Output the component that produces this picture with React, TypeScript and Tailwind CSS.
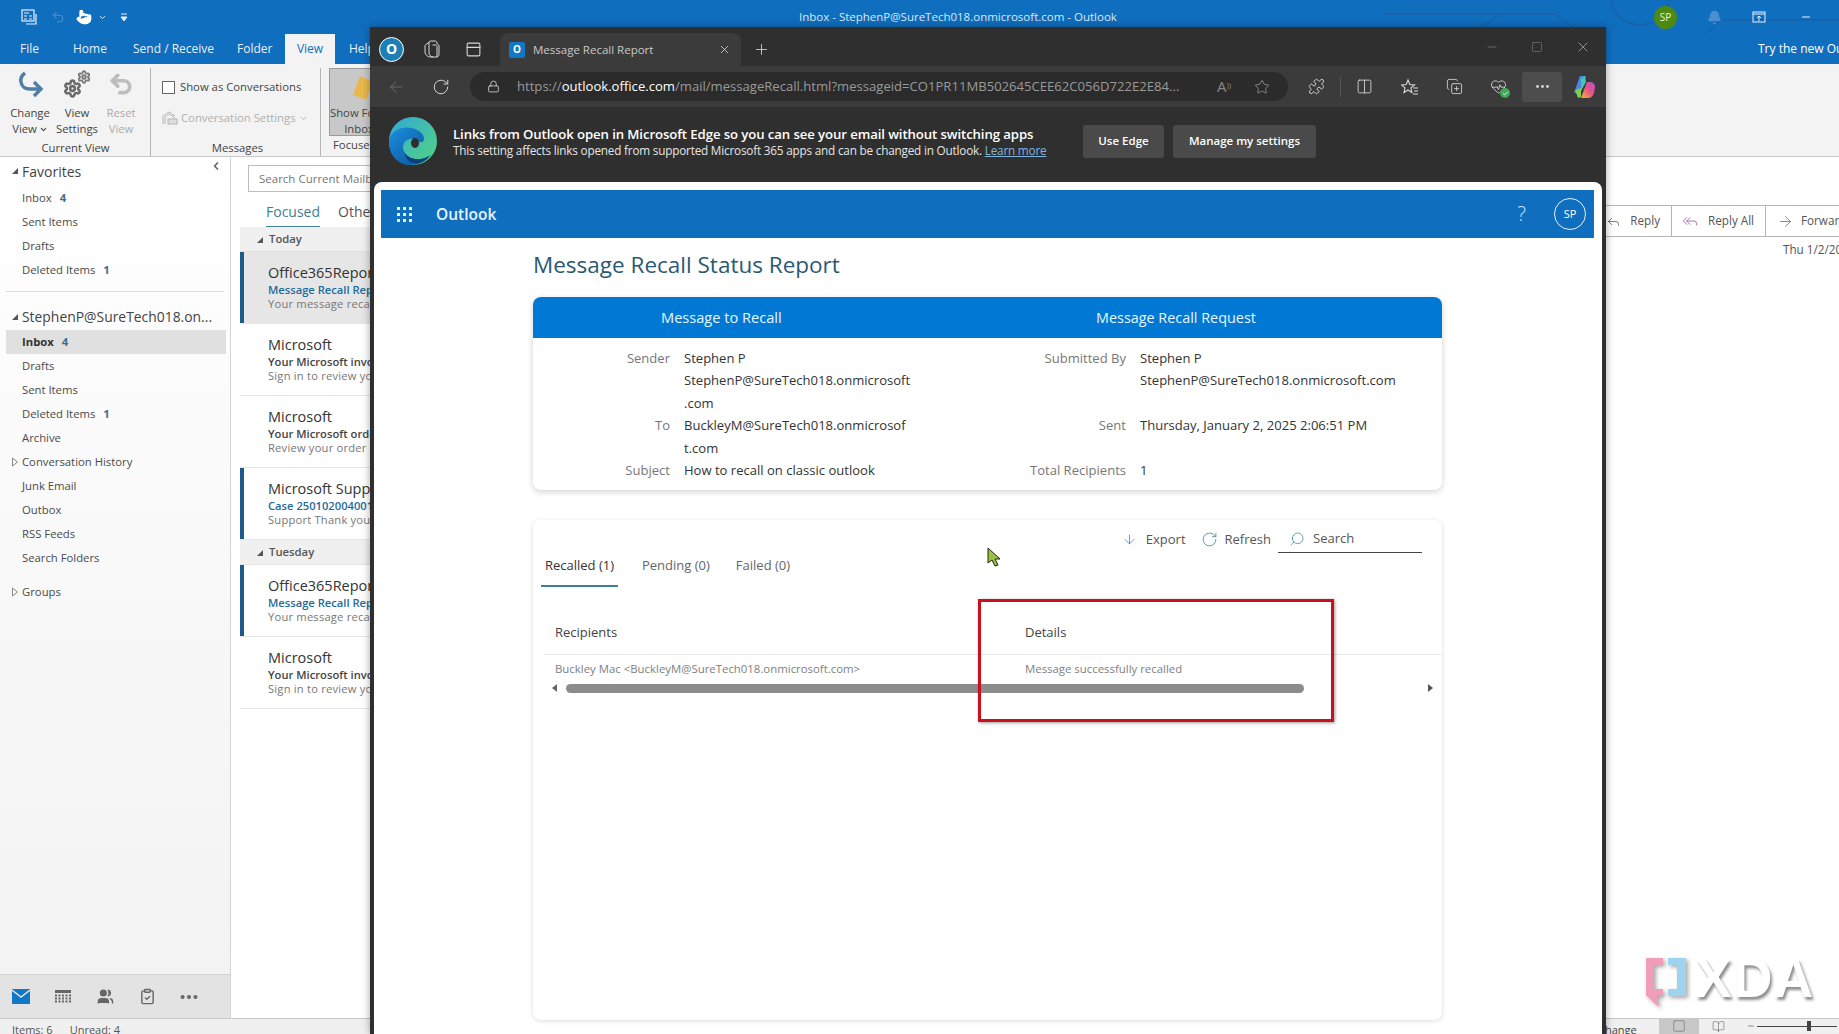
import React from "react";
import {
  Undo2, Pointer, ChevronDown, ChevronLeft, Settings, X, Plus, ArrowLeft, RotateCw, Lock, Star, Puzzle,
  Columns2, CopyPlus, HeartPulse, Ellipsis, Minus, Square, PanelTop, ArrowDown, Search,
  Reply, ReplyAll, ArrowRight, Bell, Users, ClipboardCheck, BookOpen, Check,
} from "lucide-react";

const Tri = ({ open }: { open?: boolean }) =>
  open ? (
    <svg width="8" height="8" viewBox="0 0 8 8" className="shrink-0"><path d="M7 1v6H1z" fill="#555" /></svg>
  ) : (
    <svg width="8" height="10" viewBox="0 0 8 10" className="shrink-0"><path d="M1.5 1l5 4-5 4z" fill="none" stroke="#888" /></svg>
  );

function NavItem({ label, count, active, arrow }: { label: string; count?: string; active?: boolean; arrow?: boolean }) {
  return (
    <div className={`h-6 flex items-center text-[11.3px] ml-[6px] mr-[4px] ${active ? "bg-[#e0e0e0] font-bold text-[#333]" : "text-[#4a4a4a]"}`}>
      <div className="w-4 flex justify-end pr-[3px]">{arrow && <Tri />}</div>
      <span className="whitespace-nowrap">{label}</span>
      {count && <span className="ml-2 font-bold text-[#3f6d8c]">{count}</span>}
    </div>
  );
}

function Msg({ from, subject, preview, bar, selected }: { from: string; subject: string; preview: string; bar?: boolean; selected?: boolean }) {
  return (
    <div className={`h-[72px] shrink-0 flex border-b ${selected ? "bg-[#e6e6e6] border-[#e6e6e6]" : "border-[#e6e6e6]"}`}>
      <div className={`w-1 shrink-0 ${bar ? "bg-[#1d5c8a]" : ""}`} />
      <div className="pl-6 pt-[11px] whitespace-nowrap">
        <div className="text-[14.5px] leading-[19px] text-[#333]">{from}</div>
        <div className={`text-[11.2px] leading-[15px] font-semibold ${bar ? "text-[#1f6a9c]" : "text-[#444]"}`}>{subject}</div>
        <div className="text-[11.2px] leading-[14px] text-[#777] tracking-[0.2px]">{preview}</div>
      </div>
    </div>
  );
}

function Group({ label }: { label: string }) {
  return (
    <div className="h-[25px] shrink-0 bg-[#f0f0f0] border-b border-[#e2e2e2] flex items-center pl-[16px] gap-[5px] text-[11.3px] font-semibold text-[#555] pt-[1px]">
      <Tri open />
      <span>{label}</span>
    </div>
  );
}

const EdgeLogo = () => (
  <svg width="50" height="50" viewBox="0 0 50 50">
    <defs>
      <linearGradient id="e1" x1="0" y1="0" x2="1" y2="1">
        <stop offset="0" stopColor="#2fa9d8" />
        <stop offset="1" stopColor="#54d47d" />
      </linearGradient>
      <linearGradient id="e2" x1="0" y1="0" x2="1" y2="1">
        <stop offset="0" stopColor="#1b8fdc" />
        <stop offset="1" stopColor="#0b4f99" />
      </linearGradient>
    </defs>
    <circle cx="25" cy="25" r="24" fill="url(#e1)" />
    <path d="M1 25C3 12 20 8 31 15c6 4 6 10 3 11-4 1-6-4-12-3-7 1-9 9-5 14 3 5 10 7 16 6 4-1 7-2 9-4-5 7-12 10-20 10C10 49 0 38 1 25z" fill="url(#e2)" />
    <path d="M17 37c3 5 10 7 16 6 4-1 7-2 9-4-3 6-10 9-16 8-5-1-9-5-9-10z" fill="#0a3f80" />
    <ellipse cx="27" cy="27" rx="4" ry="5" fill="#2f2f2f" />
  </svg>
);

const Copilot = () => (
  <svg width="24" height="24" viewBox="0 0 24 24">
    <defs>
      <linearGradient id="c1" x1="0" y1="0" x2="1" y2="1">
        <stop offset="0" stopColor="#2aa5e8" />
        <stop offset="1" stopColor="#7c5be0" />
      </linearGradient>
      <linearGradient id="c2" x1="0" y1="1" x2="1" y2="0">
        <stop offset="0" stopColor="#f6b73c" />
        <stop offset="0.5" stopColor="#e8557f" />
        <stop offset="1" stopColor="#b44ed6" />
      </linearGradient>
    </defs>
    <path d="M8 1h6l-5 15a3 3 0 0 1-3 2H2z" fill="url(#c1)" />
    <path d="M9 23h7c3 0 5-2 6-5l1-6c0-3-2-5-5-5l-3 0z" fill="url(#c2)" />
    <path d="M9 4l4-3 1 6-5 9z" fill="#3fc8b8" />
    <path d="M3 15l6-2 0 9-3 1z" fill="#7ad04f" />
  </svg>
);

export default function App() {
  const fav = [
    { label: "Inbox", count: "4" },
    { label: "Sent Items" },
    { label: "Drafts" },
    { label: "Deleted Items", count: "1" },
  ];
  const folders = [
    { label: "Drafts" },
    { label: "Sent Items" },
    { label: "Deleted Items", count: "1" },
    { label: "Archive" },
    { label: "Conversation History", arrow: true },
    { label: "Junk Email" },
    { label: "Outbox" },
    { label: "RSS Feeds" },
    { label: "Search Folders" },
  ];
  return (
    <div className="relative w-[1839px] h-[1034px] overflow-hidden bg-white flex flex-col font-['Open_Sans',sans-serif]">
      {/* Outlook title bar */}
      <div className="relative h-[34px] shrink-0 bg-[#106ebe] flex items-center text-[#d8e8f6]">
        <svg className="absolute left-[1380px] top-0" width="459" height="64" viewBox="0 0 459 64" fill="none" stroke="#1a62a8" strokeWidth="1.5">
          <path d="M5 14h170l40 30h60M230 -5a30 30 0 1 0 60 0a30 30 0 1 0 -60 0M300 60l40-40h119M120 14l-40 30H40" />
        </svg>
        <div className="relative w-[799px] h-full flex items-center shrink-0">
          <svg width="18" height="18" viewBox="0 0 18 18" className="ml-[20px]" fill="none" stroke="#e6f0fa" strokeWidth="1.2">
            <rect x="2" y="2" width="12" height="11" /><path d="M4 5h5M4 8h3M9 8h3M4 11h3M9 11h3M6 16h10V6" />
          </svg>
          <Undo2 size={14} className="ml-[13px] text-[#4c8fd0]" strokeWidth={1.8} />
          <Pointer size={16} className="ml-[11px] text-white" strokeWidth={2} fill="white" />
          <ChevronDown size={9} className="ml-[6px] text-[#e6f0fa]" strokeWidth={2.5} />
          <svg width="8" height="9" viewBox="0 0 8 9" className="ml-[13px]"><path d="M1 1h6M1 4h6l-3 4z" fill="#e6f0fa" stroke="#e6f0fa" /></svg>
        </div>
        <span className="relative text-[11.5px] whitespace-nowrap">Inbox - StephenP@SureTech018.onmicrosoft.com - Outlook</span>
        <div className="relative ml-auto flex items-center h-full pr-[27px]">
          <div className="w-[23px] h-[23px] rounded-full bg-[#4e8a12] text-[#e6f4d8] text-[10px] flex items-center justify-center">SP</div>
          <Bell size={15} className="ml-[30px] text-[#4c8fd0]" fill="#4c8fd0" />
          <svg width="14" height="12" viewBox="0 0 14 12" className="ml-[30px]" fill="none" stroke="#e6f0fa"><rect x="1" y="1" width="12" height="10" /><path d="M1 3h12M7 10V5M5 7l2-2 2 2" /></svg>
          <Minus size={12} className="ml-[34px] text-[#e6f0fa]" />
        </div>
      </div>

      {/* Ribbon tabs */}
      <div className="relative h-[30px] shrink-0 bg-[#106ebe] flex items-center text-[12px] text-[#e6f0fa] overflow-hidden whitespace-nowrap">
        <span className="ml-[20px] w-[53px] shrink-0">File</span>
        <span className="w-[60px] shrink-0">Home</span>
        <span className="w-[104px] shrink-0">Send / Receive</span>
        <span className="w-[48px] shrink-0">Folder</span>
        <span className="w-[50px] shrink-0 h-full bg-[#f3f3f3] text-[#106ebe] flex items-center justify-center">View</span>
        <span className="ml-[14px] w-[1409px] shrink-0">Help</span>
        <span className="shrink-0 text-white">Try the new Outlook</span>
      </div>

      {/* Ribbon */}
      <div className="h-[93px] shrink-0 bg-[#f3f3f3] border-b border-[#c8c8c8] flex text-[11.3px] text-[#444] pt-[4px]">
        <div className="w-[151px] shrink-0 border-r border-[#b5b5b5] flex flex-col">
          <div className="flex-1 flex pt-[2px]">
            <div className="w-[56px] flex flex-col items-center leading-[16px] pl-[4px]">
              <svg width="28" height="28" viewBox="0 0 28 28" fill="none" stroke="#4f7fa8" strokeWidth="3.4"><path d="M9 3C2 8 4 19 14 19h10M18 12l7 7-7 7" /></svg>
              <span className="mt-[7px]">Change</span>
              <span className="flex items-center gap-[2px]">View<ChevronDown size={9} strokeWidth={3} /></span>
            </div>
            <div className="w-[42px] flex flex-col items-center leading-[16px]">
              <div className="relative w-[28px] h-[28px]">
                <Settings size={14} strokeWidth={3.2} className="absolute right-0 top-0 text-[#7a7a7a]" />
                <Settings size={19} strokeWidth={3.2} className="absolute left-0 bottom-0 text-[#6a6a6a]" />
              </div>
              <span className="mt-[7px]">View</span>
              <span>Settings</span>
            </div>
            <div className="w-[46px] flex flex-col items-center leading-[16px] text-[#aaa]">
              <Undo2 size={26} strokeWidth={3.4} className="text-[#bdbdbd] h-[28px]" />
              <span className="mt-[7px]">Reset</span>
              <span>View</span>
            </div>
          </div>
          <div className="text-center leading-[16px] pl-[1px]">Current View</div>
        </div>
        <div className="w-[170px] shrink-0 border-r border-[#b5b5b5] flex flex-col">
          <div className="flex-1 pl-[11px] pt-[11px]">
            <div className="flex items-center gap-[5px] whitespace-nowrap">
              <div className="w-[13px] h-[13px] border border-[#666] bg-white" />
              <span>Show as Conversations</span>
            </div>
            <div className="flex items-center gap-[3px] mt-[14px] text-[#b0b0b0] whitespace-nowrap">
              <svg width="16" height="16" viewBox="0 0 16 16" fill="none" stroke="#b5b5b5"><path d="M1 14V6l6-4 6 4M3 14V7l4-3 5 3v2" /><rect x="6" y="9" width="9" height="5" fill="#ddd" /></svg>
              <span>Conversation Settings</span>
              <ChevronDown size={9} strokeWidth={2.5} />
            </div>
          </div>
          <div className="text-center leading-[16px] pl-[4px]">Messages</div>
        </div>
        <div className="flex-1 flex flex-col pl-[8px]">
          <div className="relative w-[60px] h-[68px] bg-[#c8c8c8] border border-[#9a9a9a] text-center leading-[16px] pt-[36px] whitespace-nowrap overflow-hidden">
            <div className="absolute left-[26px] top-[9px] w-[14px] h-[20px] bg-[#e8b94a] rotate-[20deg]" />
            Show Focused<br />Inbox
          </div>
          <div className="leading-[16px] mt-[1px] pl-[4px] whitespace-nowrap">Focused Inbox</div>
        </div>
      </div>

      {/* Body */}
      <div className="flex-1 flex min-h-0">
        <div className="w-[231px] shrink-0 border-r border-[#d4d4d4] flex flex-col bg-linear-to-b from-white to-[#f2f2f2]">
          <div className="flex items-center h-[28px] pl-[11px] relative">
            <Tri open />
            <span className="ml-[3px] text-[14px] text-[#444]">Favorites</span>
            <ChevronLeft size={12} strokeWidth={3.5} className="absolute right-[8px] top-[3px] text-[#666]" />
          </div>
          <div className="h-px" />
          {fav.map((f) => <NavItem key={f.label} {...f} />)}
          <div className="h-px bg-[#dcdcdc] mx-[6px] mt-[9px] mb-[12px]" />
          <div className="flex items-center h-[26px] pl-[11px]">
            <Tri open />
            <span className="ml-[3px] text-[13.9px] text-[#444] whitespace-nowrap">StephenP@SureTech018.on...</span>
          </div>
          <NavItem label="Inbox" count="4" active />
          {folders.map((f) => <NavItem key={f.label} {...f} />)}
          <div className="mt-[10px]"><NavItem label="Groups" arrow /></div>
          <div className="mt-auto h-[44px] border-t border-[#d4d4d4] bg-[#e3e3e3] flex items-center text-[#666]">
            <svg width="18" height="15" viewBox="0 0 18 15" className="ml-[12px]">
              <rect width="18" height="15" fill="#1277c4" />
              <path d="M0 1l9 7 9-7" fill="none" stroke="#e3e3e3" strokeWidth="1.4" />
            </svg>
            <svg width="16" height="14" viewBox="0 0 16 14" className="ml-[25px]" fill="#666">
              <rect x="0" y="0" width="16" height="3" />
              {[4.5, 7.5, 10.5].map((y) => [0, 3.5, 7, 10.5, 14].map((x) => <rect key={`${x}-${y}`} x={x} y={y} width="2" height="2" />))}
            </svg>
            <Users size={17} className="ml-[26px]" fill="#666" />
            <ClipboardCheck size={17} className="ml-[25px]" strokeWidth={2} />
            <Ellipsis size={22} className="ml-[22px]" strokeWidth={2.5} />
          </div>
        </div>

        <div className="w-[150px] shrink-0 pl-[9px] flex flex-col overflow-hidden">
          <div className="h-[27px] ml-[8px] mt-[8px] shrink-0 border border-[#bdbdbd] flex items-center pl-[10px] text-[11.5px] text-[#777] whitespace-nowrap">Search Current Mailbox</div>
          <div className="h-[35px] shrink-0 flex items-end pl-[26px] gap-[18px] text-[14px] whitespace-nowrap">
            <span className="text-[#3f7f97] border-b border-[#3f7f97] leading-[21px] h-[26px]">Focused</span>
            <span className="text-[#555] leading-[21px] h-[26px]">Other</span>
          </div>
          <Group label="Today" />
          <Msg from="Office365Reports" subject="Message Recall Report" preview="Your message recall" bar selected />
          <Msg from="Microsoft" subject="Your Microsoft invoice" preview="Sign in to review your" />
          <Msg from="Microsoft" subject="Your Microsoft order" preview="Review your order d" />
          <Msg from="Microsoft Support" subject="Case 25010200400160" preview="Support  Thank you" bar />
          <Group label="Tuesday" />
          <Msg from="Office365Reports" subject="Message Recall Report" preview="Your message recall" bar />
          <Msg from="Microsoft" subject="Your Microsoft invoice" preview="Sign in to review your" />
        </div>

        <div className="flex-1 min-w-0 flex flex-col overflow-hidden text-[11.7px] text-[#555]">
          <div className="mt-[48px] h-[32px] border-y border-[#b5b5b5] flex justify-end whitespace-nowrap">
            <div className="w-[67px] border-r border-[#b5b5b5] flex items-center justify-end gap-[9px] pr-[11px]"><Reply size={15} strokeWidth={1.2} />Reply</div>
            <div className="w-[94px] border-r border-[#b5b5b5] flex items-center gap-[10px] pl-[10px]"><ReplyAll size={16} strokeWidth={1.2} className="text-[#8a5aa8]" />Reply All</div>
            <div className="w-[73px] flex items-center gap-[7px] pl-[11px] overflow-hidden"><ArrowRight size={17} strokeWidth={1.2} className="text-[#3f8a8a] shrink-0" />Forward</div>
          </div>
          <div className="mt-[4px] pl-[1402px] whitespace-nowrap">Thu 1/2/2025</div>
        </div>
      </div>

      {/* Status bar */}
      <div className="h-[16px] shrink-0 bg-[#f0f0f0] border-t border-[#c8c8c8] flex text-[11px] leading-[22px] text-[#555] overflow-hidden whitespace-nowrap">
        <span className="ml-[12px] shrink-0">Items: 6</span>
        <span className="ml-[17px] w-[1530px] shrink-0">Unread: 4</span>
        <span className="w-[59px] shrink-0 text-[#444]">change</span>
        <div className="w-[40px] shrink-0 h-full bg-[#c8c8c8] flex justify-center"><Square size={14} strokeWidth={1} className="text-[#666]" /></div>
        <div className="w-[40px] shrink-0 flex justify-center pt-[1px]"><BookOpen size={13} strokeWidth={1} /></div>
        <div className="flex items-center h-[14px] ml-[8px]">
          <Minus size={8} />
          <div className="relative ml-[2px] w-[80px] h-px bg-[#444]"><div className="absolute left-[50px] -top-[5px] w-[4px] h-[10px] bg-[#444]" /></div>
        </div>
      </div>

      {/* Edge window over Outlook */}
      <div className="absolute left-[370px] top-[27px] w-[1236px] h-[1007px] bg-[#2f2f2f] flex flex-col shadow-[0_0_8px_rgba(0,0,0,0.35)]">
        {/* tab strip */}
        <div className="h-[39px] shrink-0 flex items-end text-[#d8d8d8] pt-[5px]">
          <div className="self-center ml-[9px] w-[25px] h-[25px] rounded-full bg-[#1c7fb5] border border-white flex items-center justify-center overflow-hidden shrink-0">
            <span className="text-white text-[14px] leading-none font-bold">O</span>
          </div>
          <svg width="20" height="20" viewBox="0 0 20 20" className="self-center ml-[18px] shrink-0" fill="none" stroke="#d8d8d8" strokeWidth="1">
            <path d="M3 7c0-1 1-2 2-2l2-2c0-.5 1-1 2-1h4c1 0 2 1 2 2v1c1 0 2 1 2 2v8c0 2-1 3-3 3H9c-3 0-6-2-6-5z" />
            <path d="M7 3v11c0 2 2 4 4 4M10.5 6h3c1 0 1.500 1 1.500 1.500V18" />
          </svg>
          <PanelTop size={17} strokeWidth={1.5} className="self-center ml-[23px] shrink-0" />
          <div className="ml-[18px] w-[241px] h-[33px] bg-[#3b3b3b] rounded-t-lg flex items-center pl-[7px] shrink-0">
            <div className="w-[16px] h-[16px] bg-[#1277c4] rounded-[2px] flex items-center justify-center text-white text-[10px] font-bold shrink-0 ml-[2px]">O</div>
            <span className="ml-[8px] text-[11.5px] text-[#c8c8c8] whitespace-nowrap">Message Recall Report</span>
            <X size={13} strokeWidth={1.5} className="ml-auto mr-[10px]" />
          </div>
          <Plus size={17} strokeWidth={1.2} className="self-center ml-[12px]" />
          <div className="self-center ml-auto flex items-center text-[#8f8f8f] pr-[15px] gap-[32px] mb-[5px]">
            <Minus size={14} strokeWidth={1} />
            <Square size={12} strokeWidth={1} />
            <X size={16} strokeWidth={1} className="text-[#bbb]" />
          </div>
        </div>
        {/* toolbar */}
        <div className="h-[41px] shrink-0 bg-[#3b3b3b] flex items-center text-[#d8d8d8]">
          <ArrowLeft size={18} strokeWidth={1.1} className="ml-[17px] text-[#777]" />
          <RotateCw size={18} strokeWidth={1.3} className="ml-[27px]" />
          <div className="ml-[20px] w-[818px] h-[29px] rounded-full bg-[#2b2b2b] flex items-center pl-[17px] pr-[12px] shrink-0">
            <Lock size={13} strokeWidth={1.5} />
            <span className="ml-[17px] w-[672px] overflow-hidden whitespace-nowrap text-[13.1px] text-[#9a9a9a]">
              https://<span className="text-white">outlook.office.com</span>/mail/messageRecall.html?messageid=CO1PR11MB502645CEE62C056D722E2E84...
            </span>
            <span className="ml-[28px] text-[15px] leading-none text-[#888]">A<sup className="text-[8px]">))</sup></span>
            <Star size={16} strokeWidth={1.2} className="ml-[23px] text-[#999]" />
          </div>
          <Puzzle size={17} strokeWidth={1.3} className="ml-[20px]" />
          <div className="ml-[15px] w-px h-[20px] bg-[#555]" />
          <Columns2 size={17} strokeWidth={1.2} className="ml-[15px]" />
          <svg width="18" height="18" viewBox="0 0 18 18" className="ml-[28px]" fill="none" stroke="#d8d8d8" strokeWidth="1.1">
            <path d="M7 2l1.800 4.500 4.700.4-3.600 3 1 4.600L7 12l-4 2.500 1-4.600-3.500-3 4.700-.4zM12 10h5M13 13h4M12 16h5" />
          </svg>
          <CopyPlus size={17} strokeWidth={1.2} className="ml-[27px]" />
          <div className="relative ml-[27px] w-[17px] h-[17px]">
            <HeartPulse size={17} strokeWidth={1.2} />
            <div className="absolute -right-[3px] -bottom-[3px] w-[10px] h-[10px] rounded-full bg-[#3fa85a] flex items-center justify-center"><Check size={7} strokeWidth={3} className="text-white" /></div>
          </div>
          <div className="ml-[15px] w-[40px] h-[30px] rounded-[3px] bg-[#4d4d4d] flex items-center justify-center"><Ellipsis size={17} /></div>
          <div className="ml-[10px]"><Copilot /></div>
        </div>
        {/* info bar */}
        <div className="h-[75px] shrink-0 flex items-center text-white pb-[7px]">
          <div className="ml-[18px] shrink-0"><EdgeLogo /></div>
          <div className="ml-[15px] w-[630px] shrink-0 whitespace-nowrap">
            <div className="text-[13.2px] leading-[18px] font-semibold tracking-[-0.1px]">Links from Outlook open in Microsoft Edge so you can see your email without switching apps</div>
            <div className="text-[11.75px] leading-[15px] text-[#e4e4e4] tracking-[-0.2px]">
              This setting affects links opened from supported Microsoft 365 apps and can be changed in Outlook. <span className="text-[#7fb4dc] underline">Learn more</span>
            </div>
          </div>
          <div className="w-[81px] h-[33px] rounded-[3px] bg-[#4a4a4a] text-[11.5px] font-semibold flex items-center justify-center shrink-0">Use Edge</div>
          <div className="ml-[9px] w-[143px] h-[33px] rounded-[3px] bg-[#4a4a4a] text-[11.5px] font-semibold flex items-center justify-center shrink-0">Manage my settings</div>
        </div>
        {/* page */}
        <div className="flex-1 mx-[4px] bg-white rounded-t-lg pt-[8px] min-h-0 flex flex-col">
          <div className="ml-[7px] mr-[8px] h-[48px] shrink-0 bg-[#106ebe] flex items-center text-white">
            <div className="ml-[16px] grid grid-cols-3 gap-[3px] w-[15px]">
              {Array.from({ length: 9 }).map((_, i) => <div key={i} className="w-[3px] h-[3px] bg-[#e6f0fa]" />)}
            </div>
            <span className="ml-[24px] pt-[1px] text-[15.5px] font-semibold text-[#e6f4fc]">Outlook</span>
            <span className="ml-auto text-[20px] font-light text-[#cfe4f6]">?</span>
            <div className="ml-[28px] mr-[8px] w-[32px] h-[32px] rounded-full border border-[#e6f0fa] text-[11px] flex items-center justify-center">SP</div>
          </div>
          <div className="ml-[159px] w-[909px] flex-1 min-h-0 flex flex-col">
            <div className="h-[59px] shrink-0 flex items-center pb-[6px] text-[22.5px] text-[#2a5a73] whitespace-nowrap">Message Recall Status Report</div>
            <div className="rounded-lg bg-white shadow-[0_2px_6px_rgba(0,0,0,0.18)] shrink-0">
              <div className="h-[41px] rounded-t-lg bg-[#0078d4] text-[#e6f6ff] flex items-center whitespace-nowrap">
                <span className="w-[456px] pl-[128px] text-[14.6px]">Message to Recall</span>
                <span className="pl-[107px] text-[14.4px]">Message Recall Request</span>
              </div>
              <div className="grid grid-cols-[137px_291px_137px_1fr] gap-x-[14px] py-[9px] text-[13.05px] leading-[22.4px] text-[#333] whitespace-nowrap">
                <div className="text-right text-[#777]">Sender</div>
                <div>Stephen P<br />StephenP@SureTech018.onmicrosoft<br />.com</div>
                <div className="text-right text-[#777]">Submitted By</div>
                <div>Stephen P<br />StephenP@SureTech018.onmicrosoft.com</div>
                <div className="text-right text-[#777]">To</div>
                <div>BuckleyM@SureTech018.onmicrosof<br />t.com</div>
                <div className="text-right text-[#777]">Sent</div>
                <div>Thursday, January 2, 2025 2:06:51 PM</div>
                <div className="text-right text-[#777]">Subject</div>
                <div>How to recall on classic outlook</div>
                <div className="text-right text-[#777]">Total Recipients</div>
                <div>1</div>
              </div>
            </div>
            <div className="relative mt-[30px] h-[500px] shrink-0 rounded-lg bg-white shadow-[0_1px_5px_rgba(0,0,0,0.14)]">
              <div className="h-[33px] pt-[5px] flex justify-end items-center text-[13px] text-[#555] whitespace-nowrap pr-[20px]">
                <ArrowDown size={15} strokeWidth={1.2} className="text-[#3a7f97] mr-[2px]" />
                <span className="ml-[7px]">Export</span>
                <RotateCw size={17} strokeWidth={1.1} className="ml-[15px] text-[#3a7f97]" />
                <span className="ml-[7px]">Refresh</span>
                <div className="ml-[7px] w-[144px] h-[28px] border-b border-[#444] flex items-center pl-[11px]">
                  <Search size={16} strokeWidth={1.1} className="text-[#3a7f97] -scale-x-100" />
                  <span className="ml-[8px]">Search</span>
                </div>
              </div>
              <div className="h-[34px] pl-[8px] flex text-[13px] text-[#666] whitespace-nowrap">
                <div className="w-[77px] border-b-[2px] border-[#3f7f97] text-center text-[#333] leading-[24px]">Recalled (1)</div>
                <div className="ml-[24px] leading-[24px]">Pending (0)</div>
                <div className="ml-[26px] leading-[24px]">Failed (0)</div>
              </div>
              <div className="mt-[23px] ml-[11px] h-[45px] border-b border-[#eaeaea] flex items-center text-[13px] font-medium text-[#444] pl-[11px]">
                <span className="w-[470px]">Recipients</span>
                <span>Details</span>
              </div>
              <div className="ml-[11px] h-[28px] flex items-center text-[11.4px] text-[#808080] pl-[11px] pb-[2px] whitespace-nowrap">
                <span className="w-[470px]">Buckley Mac &lt;BuckleyM@SureTech018.onmicrosoft.com&gt;</span>
                <span>Message successfully recalled</span>
              </div>
              <div className="h-[10px] flex items-center pl-[19px]">
                <svg width="6" height="8" viewBox="0 0 6 8"><path d="M5 0v8L0 4z" fill="#666" /></svg>
                <div className="ml-[8px] w-[738px] h-[9px] rounded-full bg-[#8c8c8c]" />
                <svg width="6" height="8" viewBox="0 0 6 8" className="ml-[123px]"><path d="M1 0v8l5-4z" fill="#555" /></svg>
              </div>
              {/* annotation */}
              <div className="absolute left-[445px] top-[79px] w-[356px] h-[123px] border-[3px] border-[#c8101e] shadow-[1px_1px_3px_rgba(0,0,0,0.4)]" />
              <svg className="absolute left-[454px] top-[27px]" width="14" height="21" viewBox="0 0 14 21">
                <path d="M1 1v15l4-3 3 6 3-1-3-6h5z" fill="#9ac43a" stroke="#222" strokeWidth="1" />
              </svg>
            </div>
          </div>
        </div>
      </div>

      {/* XDA watermark */}
      <div className="absolute left-[1640px] top-[951px] flex items-start">
        <svg width="52" height="64" viewBox="0 0 52 64" className="mt-[5px] drop-shadow-[2px_2px_2px_rgba(0,0,0,0.35)]">
          <path d="M6 2h17v7H14v24h9v7h-6l2 11-12-11H6z" fill="#ef9db8" />
          <path d="M28 2h18v38H28v-7h9V9h-9z" fill="#9fd4ef" />
        </svg>
        <span className="ml-[3px] text-[55px] leading-[55px] font-bold text-white tracking-[1px] font-['Liberation_Sans',sans-serif] [text-shadow:2px_3px_3px_rgba(0,0,0,0.45)]">XDA</span>
      </div>
    </div>
  );
}
